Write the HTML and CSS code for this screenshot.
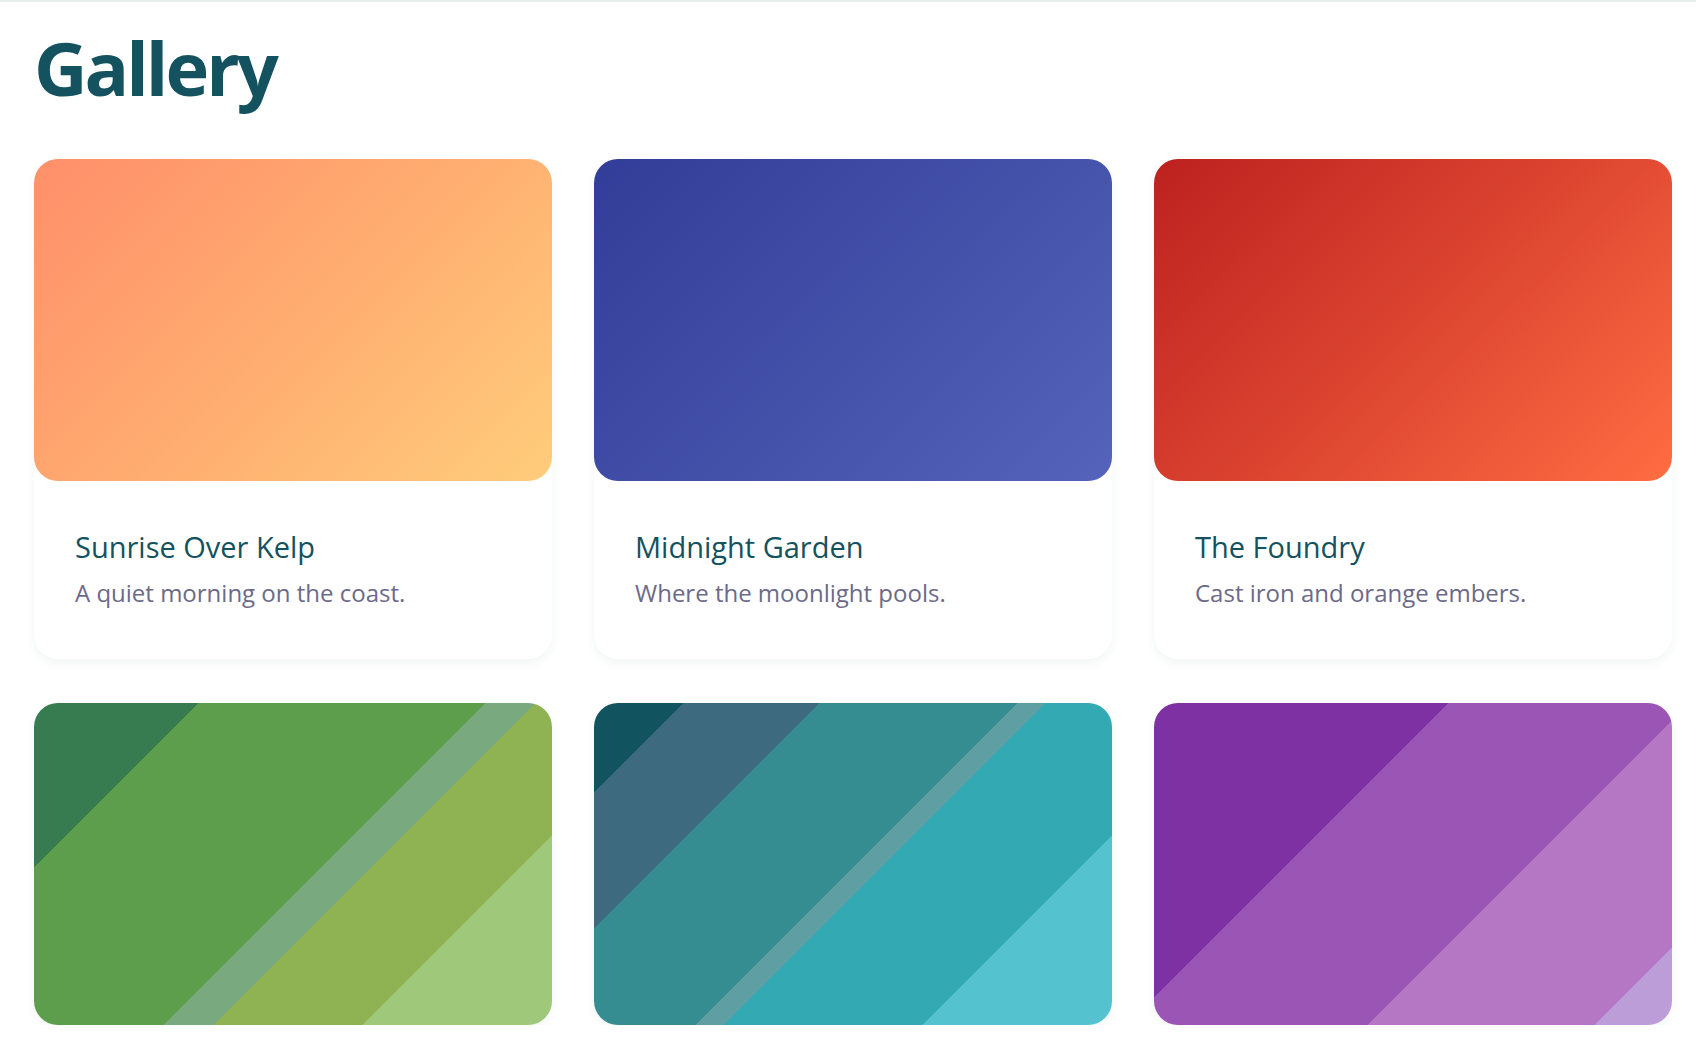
FILE: index.html
```html
<!DOCTYPE html>
<html lang="en">
<head>
    <meta charset="UTF-8">
    <meta name="viewport" content="width=device-width, initial-scale=1.0">
    <title>Gallery</title>
    <link rel="stylesheet" href="styles.css">
</head>
<body>
    <main class="page">
        <h1 class="page-title">Gallery</h1>

        <div class="gallery">
            <div class="card">
                <div class="card-art art-sunrise"></div>
                <div class="card-body">
                    <h2 class="card-title">Sunrise Over Kelp</h2>
                    <p class="card-text">A quiet morning on the coast.</p>
                </div>
            </div>

            <div class="card">
                <div class="card-art art-midnight"></div>
                <div class="card-body">
                    <h2 class="card-title">Midnight Garden</h2>
                    <p class="card-text">Where the moonlight pools.</p>
                </div>
            </div>

            <div class="card">
                <div class="card-art art-foundry"></div>
                <div class="card-body">
                    <h2 class="card-title">The Foundry</h2>
                    <p class="card-text">Cast iron and orange embers.</p>
                </div>
            </div>

            <div class="card">
                <div class="card-art art-meadow"></div>
            </div>

            <div class="card">
                <div class="card-art art-lagoon"></div>
            </div>

            <div class="card">
                <div class="card-art art-dusk"></div>
            </div>
        </div>
    </main>
</body>
</html>
```

FILE: styles.css
```css
body {
    margin: 0;
    font-family: "Open Sans", "Noto Sans", sans-serif;
    background-color: #ffffff;
    border-top: 2px solid #e8efef;
}
.page {
    padding: 22px 24px 0 34px;
}
.page-title {
    margin: 0 0 46px 0;
    font-size: 74px;
    line-height: 1.2;
    font-weight: 700;
    color: #13525e;
    letter-spacing: -3px;
}
.gallery {
    display: grid;
    grid-template-columns: repeat(3, 1fr);
    column-gap: 42px;
    row-gap: 44px;
}
.card {
    background-color: #ffffff;
    border-radius: 24px;
    box-shadow: 0 4px 10px rgba(40, 60, 60, 0.06);
}
.card-art {
    height: 322px;
    border-radius: 24px;
}
.card-body {
    padding: 48px 40px 50px 41px;
}
.card-title {
    margin: 0 0 12px 0;
    font-size: 29px;
    line-height: 36px;
    font-weight: 400;
    color: #13525e;
}
.card-text {
    margin: 0;
    font-size: 24px;
    line-height: 32px;
    color: #6c6a88;
}

/* artwork */
.art-sunrise {
    background: linear-gradient(135deg, #ff8f6a 0%, #ffac70 50%, #ffcd7b 100%);
}
.art-midnight {
    background: linear-gradient(135deg, #313d98 0%, #4350a8 50%, #5663ba 100%);
}
.art-foundry {
    background: linear-gradient(135deg, #bd211f 0%, #dc4430 50%, #ff6d42 100%);
}
.art-meadow {
    background: linear-gradient(135deg,
        #377c50 0 19.6%,
        #5d9e4c 19.6% 53.8%,
        #78a97f 53.8% 59.7%,
        #8fb352 59.7% 77.4%,
        #9fc87b 77.4% 100%);
}
.art-lagoon {
    background: linear-gradient(135deg,
        #115460 0 10.7%,
        #3e6a80 10.7% 26.8%,
        #368d91 26.8% 50.4%,
        #5f9fa3 50.4% 53.8%,
        #33a9b4 53.8% 77.4%,
        #54c3cf 77.4% 100%);
}
.art-dusk {
    background: linear-gradient(135deg,
        #7d31a3 0 35%,
        #9a55b5 35% 63.7%,
        #b576c4 63.7% 90.8%,
        #bd9dd7 90.8% 100%);
}
```
